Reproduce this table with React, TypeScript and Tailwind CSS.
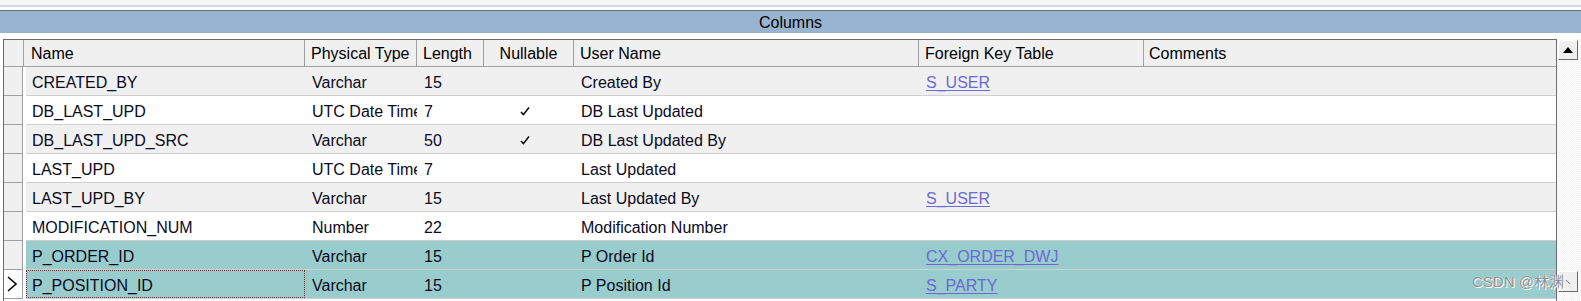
type Row = {
  name: string;
  type: string;
  length: string;
  nullable: boolean;
  user: string;
  fk: string;
};

const rows: Row[] = [
  { name: 'CREATED_BY', type: 'Varchar', length: '15', nullable: false, user: 'Created By', fk: 'S_USER' },
  { name: 'DB_LAST_UPD', type: 'UTC Date Time', length: '7', nullable: true, user: 'DB Last Updated', fk: '' },
  { name: 'DB_LAST_UPD_SRC', type: 'Varchar', length: '50', nullable: true, user: 'DB Last Updated By', fk: '' },
  { name: 'LAST_UPD', type: 'UTC Date Time', length: '7', nullable: false, user: 'Last Updated', fk: '' },
  { name: 'LAST_UPD_BY', type: 'Varchar', length: '15', nullable: false, user: 'Last Updated By', fk: 'S_USER' },
  { name: 'MODIFICATION_NUM', type: 'Number', length: '22', nullable: false, user: 'Modification Number', fk: '' },
  { name: 'P_ORDER_ID', type: 'Varchar', length: '15', nullable: false, user: 'P Order Id', fk: 'CX_ORDER_DWJ' },
  { name: 'P_POSITION_ID', type: 'Varchar', length: '15', nullable: false, user: 'P Position Id', fk: 'S_PARTY' },
];

function Check() {
  return (
    <svg width="10" height="10" viewBox="0 0 10 10" className="shrink-0">
      <path d="M1 6 L3.4 8.6 L9 1.5" fill="none" stroke="#000" strokeWidth="1.5" />
    </svg>
  );
}

export default function App() {
  return (
    <div className="relative w-[1581px] h-[301px] overflow-hidden bg-white text-[16px] text-[#0a0a1e] font-['Liberation_Sans',Arial,sans-serif]">
      <div className="h-[5px] bg-[#f6f6f6]" />
      <div className="h-[2px] bg-[#d3dce6]" />
      <div className="h-[3px] bg-white" />
      <div className="h-px bg-[#6e6e6e]" />
      <div className="h-[22px] bg-[#98b4d0] flex items-center justify-center text-black leading-none pt-[2px]">Columns</div>
      <div className="h-[6px] bg-white" />

      <div className="flex h-[262px]">
        <div className="w-[3px]" />
        <div className="w-[1554px] border-t border-l border-r border-[#6b6b6b] flex flex-col">
          {/* header */}
          <div className="flex h-[27px] bg-[#f0f0f0] border-b border-[#a0a0a0] text-black leading-none">
            <div className="w-[20px] border-r border-[#a0a0a0]" />
            <div className="w-[281px] pl-[7px] pt-[2px] flex items-center border-r border-[#a0a0a0]">Name</div>
            <div className="w-[112px] pl-[6px] pt-[2px] flex items-center border-r border-[#a0a0a0] whitespace-nowrap overflow-hidden">Physical Type</div>
            <div className="w-[67px] pl-[6px] pt-[2px] flex items-center border-r border-[#a0a0a0]">Length</div>
            <div className="w-[90px] pt-[2px] flex items-center justify-center border-r border-[#a0a0a0]">Nullable</div>
            <div className="w-[345px] pl-[6px] pt-[2px] flex items-center border-r border-[#a0a0a0]">User Name</div>
            <div className="w-[225px] pl-[6px] pt-[2px] flex items-center border-r border-[#a0a0a0]">Foreign Key Table</div>
            <div className="flex-1 pl-[5px] pt-[2px] flex items-center">Comments</div>
          </div>

          {rows.map((r, i) => {
            const selected = i >= 6;
            const bg = selected ? 'bg-[#99cccc]' : i % 2 === 0 ? 'bg-[#f0f0f0]' : 'bg-white';
            const current = i === rows.length - 1;
            return (
              <div key={r.name} className="flex h-[29px] leading-none">
                <div className={`w-[19px] border-r border-b border-[#a0a0a0] flex items-center ${current ? 'bg-white' : 'bg-[#f0f0f0]'}`}>
                  {current && (
                    <svg width="14" height="18" viewBox="0 0 14 18" className="ml-[1px]">
                      <path d="M3 2 L11 9 L3 16" fill="none" stroke="#000" strokeWidth="1.6" />
                    </svg>
                  )}
                </div>
                <div className="w-[3px] bg-white" />
                <div className={`flex-1 flex border-b border-[#d0d0d0] ${bg}`}>
                  <div className={`w-[279px] pl-[6px] pt-[3px] flex items-center whitespace-nowrap ${current ? 'outline outline-1 outline-dotted outline-[#6b3030] -outline-offset-1' : ''}`}>{r.name}</div>
                  <div className="w-[112px] pl-[7px] pt-[3px] flex items-center whitespace-nowrap overflow-hidden">{r.type}</div>
                  <div className="w-[67px] pl-[7px] pt-[3px] flex items-center">{r.length}</div>
                  <div className="w-[90px] pl-[36px] pt-[2px] flex items-center">{r.nullable && <Check />}</div>
                  <div className="w-[345px] pl-[7px] pt-[3px] flex items-center whitespace-nowrap">{r.user}</div>
                  <div className="w-[225px] pl-[7px] pt-[3px] flex items-center">
                    {r.fk && <span className="text-[#6a6ad4] underline underline-offset-2">{r.fk}</span>}
                  </div>
                  <div className="flex-1" />
                </div>
              </div>
            );
          })}
        </div>

        {/* scrollbar */}
        <div className="flex-1 flex flex-col items-center bg-[repeating-conic-gradient(#f2f2f2_0%_25%,#ffffff_0%_50%)] bg-[length:2px_2px]">
          <div className="mt-[1px] ml-[-2px] w-[20px] h-[20px] bg-[#f0f0f0] border border-t-white border-l-white border-r-[#6b6b6b] border-b-[#6b6b6b] flex items-center justify-center">
            <svg width="10" height="6" viewBox="0 0 10 6"><path d="M0 6 L5 0 L10 6 Z" fill="#000" /></svg>
          </div>
          <div className="flex-1" />
          <div className="mb-[9px] ml-[-2px] w-[20px] h-[21px] bg-[#f0f0f0] border border-t-white border-l-white border-r-[#6b6b6b] border-b-[#6b6b6b] flex items-center justify-center">
            <svg width="6" height="6" viewBox="0 0 6 6"><path d="M1 1 L5 5" stroke="#8a8a8a" strokeWidth="1" /></svg>
          </div>
        </div>
      </div>

      <div className="absolute left-[1472px] top-[274px] text-[15px] text-[#8f8f8f] leading-none [text-shadow:0_0_1px_#ffffff,1px_1px_0_#ffffff] font-['Liberation_Sans','Noto_Sans_CJK_SC',sans-serif] whitespace-nowrap">
        CSDN @林渊
      </div>
    </div>
  );
}
